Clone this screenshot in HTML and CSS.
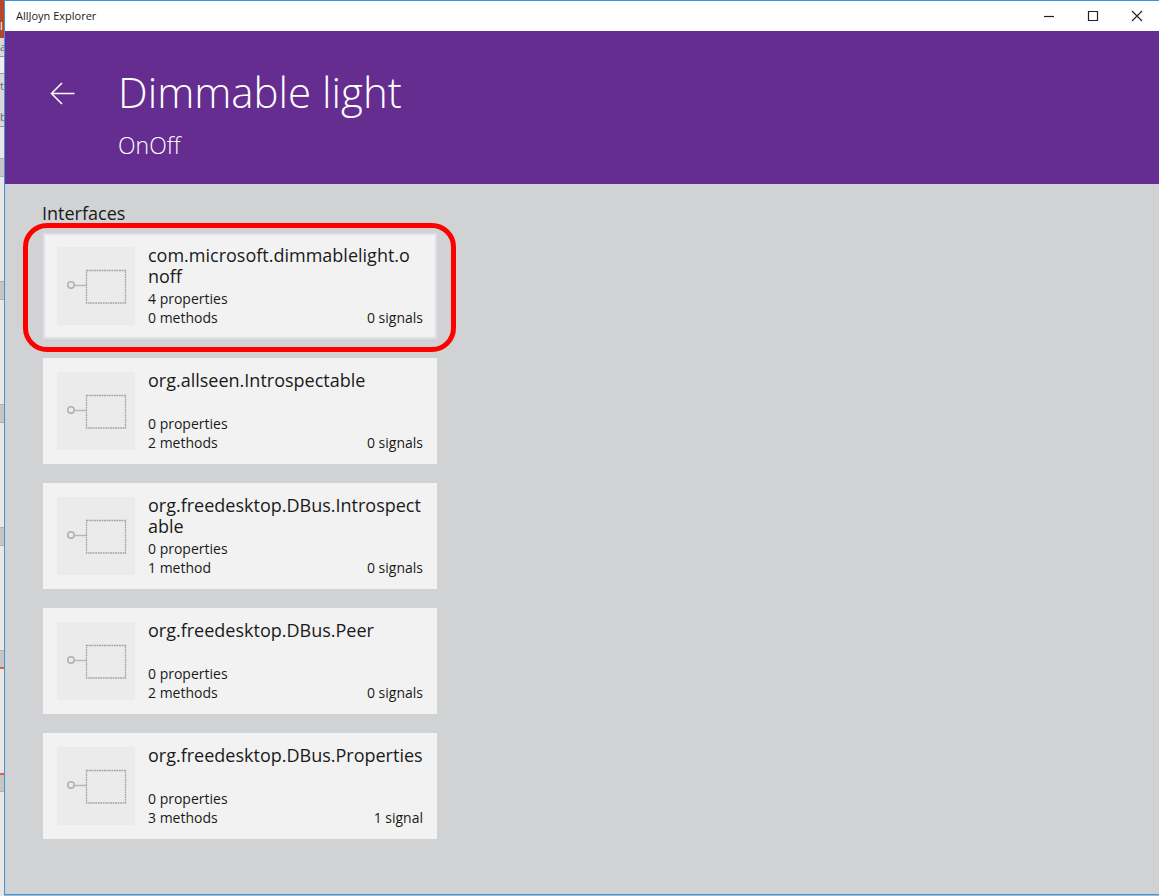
FILE: index.html
```html
<!DOCTYPE html>
<html lang="en">
<head>
<meta charset="utf-8">
<title>AllJoyn Explorer</title>
<link rel="stylesheet" href="styles.css">
</head>
<body>
<svg width="0" height="0" class="defs" aria-hidden="true">
  <symbol id="interface" viewBox="0 0 78 78">
    <circle cx="14" cy="38" r="3.2" fill="none" stroke="#b0b0b0" stroke-width="1.5"/>
    <path d="M17.5 38.5H29" stroke="#b8b8b8" stroke-width="1.5"/>
    <rect x="29.5" y="23.5" width="39" height="32.5" fill="none" stroke="#a4a4a4" stroke-width="1.3" stroke-dasharray="1.8 .7"/>
  </symbol>
</svg>
<div class="desktop">
  <div class="backdrop" aria-hidden="true">
    <i class="seg red">l</i><i class="seg tool">a</i><i class="seg field"></i><i class="seg tool tall">t</i><i class="seg tool">b</i>
    <i class="seg p1"></i><i class="seg bar"></i><i class="seg p2"></i><i class="seg bar"></i><i class="seg p2"></i><i class="seg bar"></i><i class="seg p2"></i><i class="seg bar"></i><i class="seg p2"></i><i class="seg bar hot-bottom"></i><i class="seg p2"></i><i class="seg bar hot-top"></i>
  </div>
  <main class="window">
    <div class="titlebar">
      <span class="app-name">AllJoyn Explorer</span>
      <button class="caption" aria-label="Minimize"><svg width="12" height="12" viewBox="0 0 12 12"><path d="M1 6.5H11"/></svg></button>
      <button class="caption" aria-label="Maximize"><svg width="12" height="12" viewBox="0 0 12 12"><path d="M1.5 1.5H10.5V10.5H1.5Z"/></svg></button>
      <button class="caption" aria-label="Close"><svg width="12" height="12" viewBox="0 0 12 12"><path d="M1 1L11 11M11 1L1 11"/></svg></button>
    </div>
    <header class="header">
      <button class="back" aria-label="Back"><svg width="26" height="24" viewBox="0 0 26 24"><path d="M24.5 12.5H1.5M12 2L1.5 12.5L12 23"/></svg></button>
      <div>
        <h1 class="title">Dimmable light</h1>
        <p class="subtitle">OnOff</p>
      </div>
    </header>
    <section class="content">
      <h2 class="section-title">Interfaces</h2>
      <ul class="cards">
        <li class="item highlighted"><button class="card focused">
          <svg class="thumb"><use href="#interface"/></svg>
          <span class="info"><span class="name">com.microsoft.dimmablelight.o<wbr>noff</span><span class="meta">4 properties</span><span class="meta row"><span>0 methods</span><span>0 signals</span></span></span>
        </button></li>
        <li class="item"><button class="card">
          <svg class="thumb"><use href="#interface"/></svg>
          <span class="info"><span class="name">org.allseen.Introspectable</span><span class="meta">0 properties</span><span class="meta row"><span>2 methods</span><span>0 signals</span></span></span>
        </button></li>
        <li class="item"><button class="card">
          <svg class="thumb"><use href="#interface"/></svg>
          <span class="info"><span class="name">org.freedesktop.DBus.Introspect<wbr>able</span><span class="meta">0 properties</span><span class="meta row"><span>1 method</span><span>0 signals</span></span></span>
        </button></li>
        <li class="item"><button class="card">
          <svg class="thumb"><use href="#interface"/></svg>
          <span class="info"><span class="name">org.freedesktop.DBus.Peer</span><span class="meta">0 properties</span><span class="meta row"><span>2 methods</span><span>0 signals</span></span></span>
        </button></li>
        <li class="item"><button class="card">
          <svg class="thumb"><use href="#interface"/></svg>
          <span class="info"><span class="name">org.freedesktop.DBus.Properties</span><span class="meta">0 properties</span><span class="meta row"><span>3 methods</span><span>1 signal</span></span></span>
        </button></li>
      </ul>
    </section>
  </main>
</div>
</body>
</html>
```

FILE: styles.css
```css
* { box-sizing: border-box; }
body {
  margin: 0;
  font-family: "Segoe UI", "Open Sans", "Noto Sans", sans-serif;
  color: #1a1a1a;
}
h1, h2, p, ul { margin: 0; padding: 0; font-weight: 400; }
ul { list-style: none; }
button { border: 0; padding: 0; margin: 0; background: none; font: inherit; color: inherit; }
.defs { display: block; }

.desktop {
  display: flex;
  min-height: 100vh;
  padding-bottom: 1px;
  background: #a9b8c4;
}

/* Sliver of the window behind */
.backdrop {
  display: flex;
  flex-direction: column;
  width: 4px;
  overflow: hidden;
  margin-bottom: -1px;
  background: #e8e8e8;
}
.seg {
  flex: none;
  width: 4px;
  height: 19px;
  overflow: hidden;
  font-size: 11px;
  font-style: normal;
  line-height: 18px;
  color: #666;
}
.red { height: 38px; padding-top: 17px; background: #b7472a; color: #fff; }
.tool { height: 19px; background: #d9d9d9; border-bottom: 1px solid #999; }
.field { height: 17px; background: #efefef; border-bottom: 1px solid #999; }
.tall { height: 34px; padding-top: 3px; border: 0; }
.bar { background: #c6c6c6; border: solid #b0b0b0; border-width: 1px 0; }
.p1 { height: 31px; }
.p2 { height: 104px; }
.hot-bottom { border-bottom: 2px solid #e0603f; }
.hot-top { border-top: 2px solid #e0603f; }

.window {
  flex: 1;
  display: flex;
  flex-direction: column;
  border: solid #3d94da;
  border-width: 1px 0 1px 1px;
  background: #d0d2d4;
}
.titlebar {
  display: flex;
  height: 30px;
  align-items: center;
  padding-left: 11px;
  background: #fff;
}
.app-name { flex: 1; font-size: 11px; line-height: 16px; }
.caption { width: 44px; height: 29px; display: grid; place-items: center; }
.caption svg { fill: none; stroke: #222; stroke-width: 1.2; }

.header {
  display: flex;
  min-height: 153px;
  padding: 31px 44px 0;
  gap: 42px;
  background: #652d90;
  color: #fff;
}
.back { width: 27px; height: 62px; display: grid; place-items: center; }
.back svg { fill: none; stroke: #fff; stroke-width: 1.5; }
.title { font-size: 42px; line-height: 60px; font-weight: 300; }
.subtitle { font-size: 23px; line-height: 32px; font-weight: 300; padding-top: 7px; }

.content { padding: 17px 37px 20px; }
.section-title { font-size: 18px; line-height: 24px; }
.cards {
  display: flex;
  flex-direction: column;
  gap: 19px;
  max-width: 395px;
  padding: 8px 0 0 1px;
}
.item { position: relative; }
.card {
  display: flex;
  width: 100%;
  gap: 13px;
  padding: 12px 14px;
  background: #f2f2f2;
  text-align: left;
}
.focused { box-shadow: inset 0 0 0 2px #e2dde8; }
/* Callout drawn around the chosen interface */
.highlighted::after {
  content: "";
  position: absolute;
  inset: -10px -19px -13px -20px;
  border: 5px solid #f00;
  border-radius: 24px;
  pointer-events: none;
}
.thumb { flex: none; width: 78px; height: 78px; margin-top: 2px; background: #ebebeb; }
.info { flex: 1; min-width: 0; display: flex; flex-direction: column; }
.name { min-height: 44px; font-size: 18px; line-height: 21px; }
.meta { font-size: 14px; line-height: 19px; }
.row { display: flex; justify-content: space-between; }
```
